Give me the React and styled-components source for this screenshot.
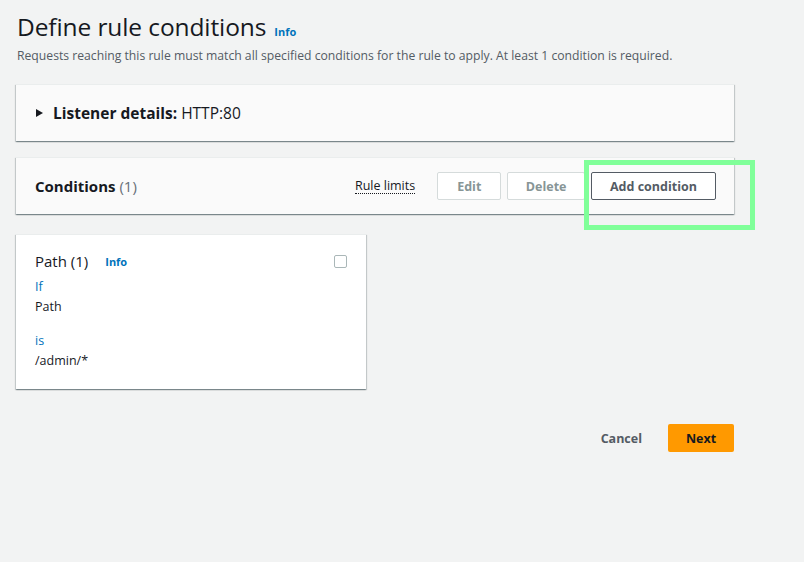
import * as React from "react";
import styled, { createGlobalStyle } from "styled-components";

const Global = createGlobalStyle`
  html, body {
    margin: 0;
    padding: 0;
    background: #f2f3f3;
    font-family: "Open Sans", "Noto Sans", sans-serif;
    color: #16191f;
  }
`;

const Page = styled.div`
  padding: 10px 70px 40px 16px;
  display: flex;
  flex-direction: column;
`;

const Heading = styled.div`
  display: flex;
  align-items: baseline;
  gap: 8px;
  padding-left: 1px;
`;

const Title = styled.h1`
  margin: 0;
  font-size: 24.5px;
  font-weight: 400;
  line-height: 33px;
  letter-spacing: -0.1px;
`;

const InfoLink = styled.span`
  color: #0073bb;
  font-size: 11px;
  font-weight: 700;
`;

const Description = styled.p`
  margin: 3px 0 0 1px;
  font-size: 12.2px;
  line-height: 20px;
  color: #545b64;
`;

const Panel = styled.div`
  background: #fafafa;
  border-top: 1px solid #eaeded;
  box-shadow: 0 1px 1px 0 rgba(0, 28, 36, 0.3), 1px 1px 1px 0 rgba(0, 28, 36, 0.15),
    -1px 1px 1px 0 rgba(0, 28, 36, 0.15);
  margin-top: ${(p) => p.$mt || 0}px;
  height: ${(p) => p.$h}px;
  display: flex;
  align-items: center;
  padding: 0 18px 0 19px;
  position: relative;
`;

const Caret = styled.span`
  width: 0;
  height: 0;
  border-top: 4.5px solid transparent;
  border-bottom: 4.5px solid transparent;
  border-left: 7px solid #16191f;
  margin-right: 10px;
  margin-left: 1px;
`;

const PanelTitle = styled.div`
  font-size: ${(p) => p.$size || 15}px;
  font-weight: 700;

  & span {
    font-weight: 400;
  }

  & em {
    font-style: normal;
    font-weight: 400;
    color: #687078;
  }
`;

const Actions = styled.div`
  margin-left: auto;
  display: flex;
  align-items: center;
  gap: 6px;
`;

const RuleLimits = styled.span`
  font-size: 12.5px;
  color: #16191f;
  border-bottom: 1px dotted #16191f;
  margin-right: 16px;
  line-height: 14px;
`;

const Button = styled.button`
  height: 28px;
  padding: 0 ${(p) => p.$px || 18}px;
  font-family: inherit;
  font-size: 12.5px;
  font-weight: 700;
  background: #ffffff;
  border: 1px solid ${(p) => (p.$disabled ? "#d5dbdb" : "#545b64")};
  color: ${(p) => (p.$disabled ? "#879596" : "#545b64")};
  border-radius: 2px;
  cursor: pointer;
`;

const Highlight = styled.div`
  position: absolute;
  left: 568px;
  top: 2px;
  width: 161px;
  height: 60px;
  border: 5px solid #80ff99;
  pointer-events: none;
`;

const Card = styled.div`
  width: 350px;
  height: 155px;
  margin-top: 20px;
  background: #ffffff;
  border-top: 1px solid #eaeded;
  box-shadow: 0 1px 1px 0 rgba(0, 28, 36, 0.3), 1px 1px 1px 0 rgba(0, 28, 36, 0.15),
    -1px 1px 1px 0 rgba(0, 28, 36, 0.15);
  padding: 13px 19px 0 19px;
  box-sizing: border-box;
`;

const CardHeader = styled.div`
  display: flex;
  align-items: center;
  height: 26px;
`;

const CardTitle = styled.div`
  font-size: 15px;
  margin-right: 17px;
`;

const Checkbox = styled.span`
  margin-left: auto;
  width: 11px;
  height: 11px;
  border: 1px solid #aab7b8;
  border-radius: 2px;
  margin-right: 0;
`;

const Label = styled.div`
  font-size: 12.5px;
  color: #0073bb;
  line-height: 20px;
  margin-top: ${(p) => p.$mt || 0}px;
`;

const Value = styled.div`
  font-size: 12.5px;
  line-height: 20px;
`;

const Footer = styled.div`
  display: flex;
  justify-content: flex-end;
  align-items: center;
  margin-top: 35px;
  gap: 26px;
`;

const LinkButton = styled.span`
  font-size: 12.5px;
  font-weight: 700;
  color: #545b64;
`;

const Primary = styled.button`
  width: 66px;
  height: 28px;
  border: 0;
  border-radius: 2px;
  background: #ff9900;
  font-family: inherit;
  font-size: 12.5px;
  font-weight: 700;
  color: #16191f;
`;

export default function App() {
  return (
    <>
      <Global />
      <Page>
        <Heading>
          <Title>Define rule conditions</Title>
          <InfoLink>Info</InfoLink>
        </Heading>
        <Description>
          Requests reaching this rule must match all specified conditions for the rule to apply. At least 1
          condition is required.
        </Description>

        <Panel $mt={18} $h={56}>
          <Caret />
          <PanelTitle $size={15.5}>
            Listener details: <span>HTTP:80</span>
          </PanelTitle>
        </Panel>

        <Panel $mt={16} $h={56}>
          <PanelTitle>
            Conditions <em>(1)</em>
          </PanelTitle>
          <Actions>
            <RuleLimits>Rule limits</RuleLimits>
            <Button $disabled $px={19}>Edit</Button>
            <Button $disabled $px={17.5}>Delete</Button>
            <Button $px={18}>Add condition</Button>
          </Actions>
          <Highlight />
        </Panel>

        <Card>
          <CardHeader>
            <CardTitle>Path (1)</CardTitle>
            <InfoLink>Info</InfoLink>
            <Checkbox />
          </CardHeader>
          <Label $mt={3}>If</Label>
          <Value>Path</Value>
          <Label $mt={14}>is</Label>
          <Value>/admin/*</Value>
        </Card>

        <Footer>
          <LinkButton>Cancel</LinkButton>
          <Primary>Next</Primary>
        </Footer>
      </Page>
    </>
  );
}
